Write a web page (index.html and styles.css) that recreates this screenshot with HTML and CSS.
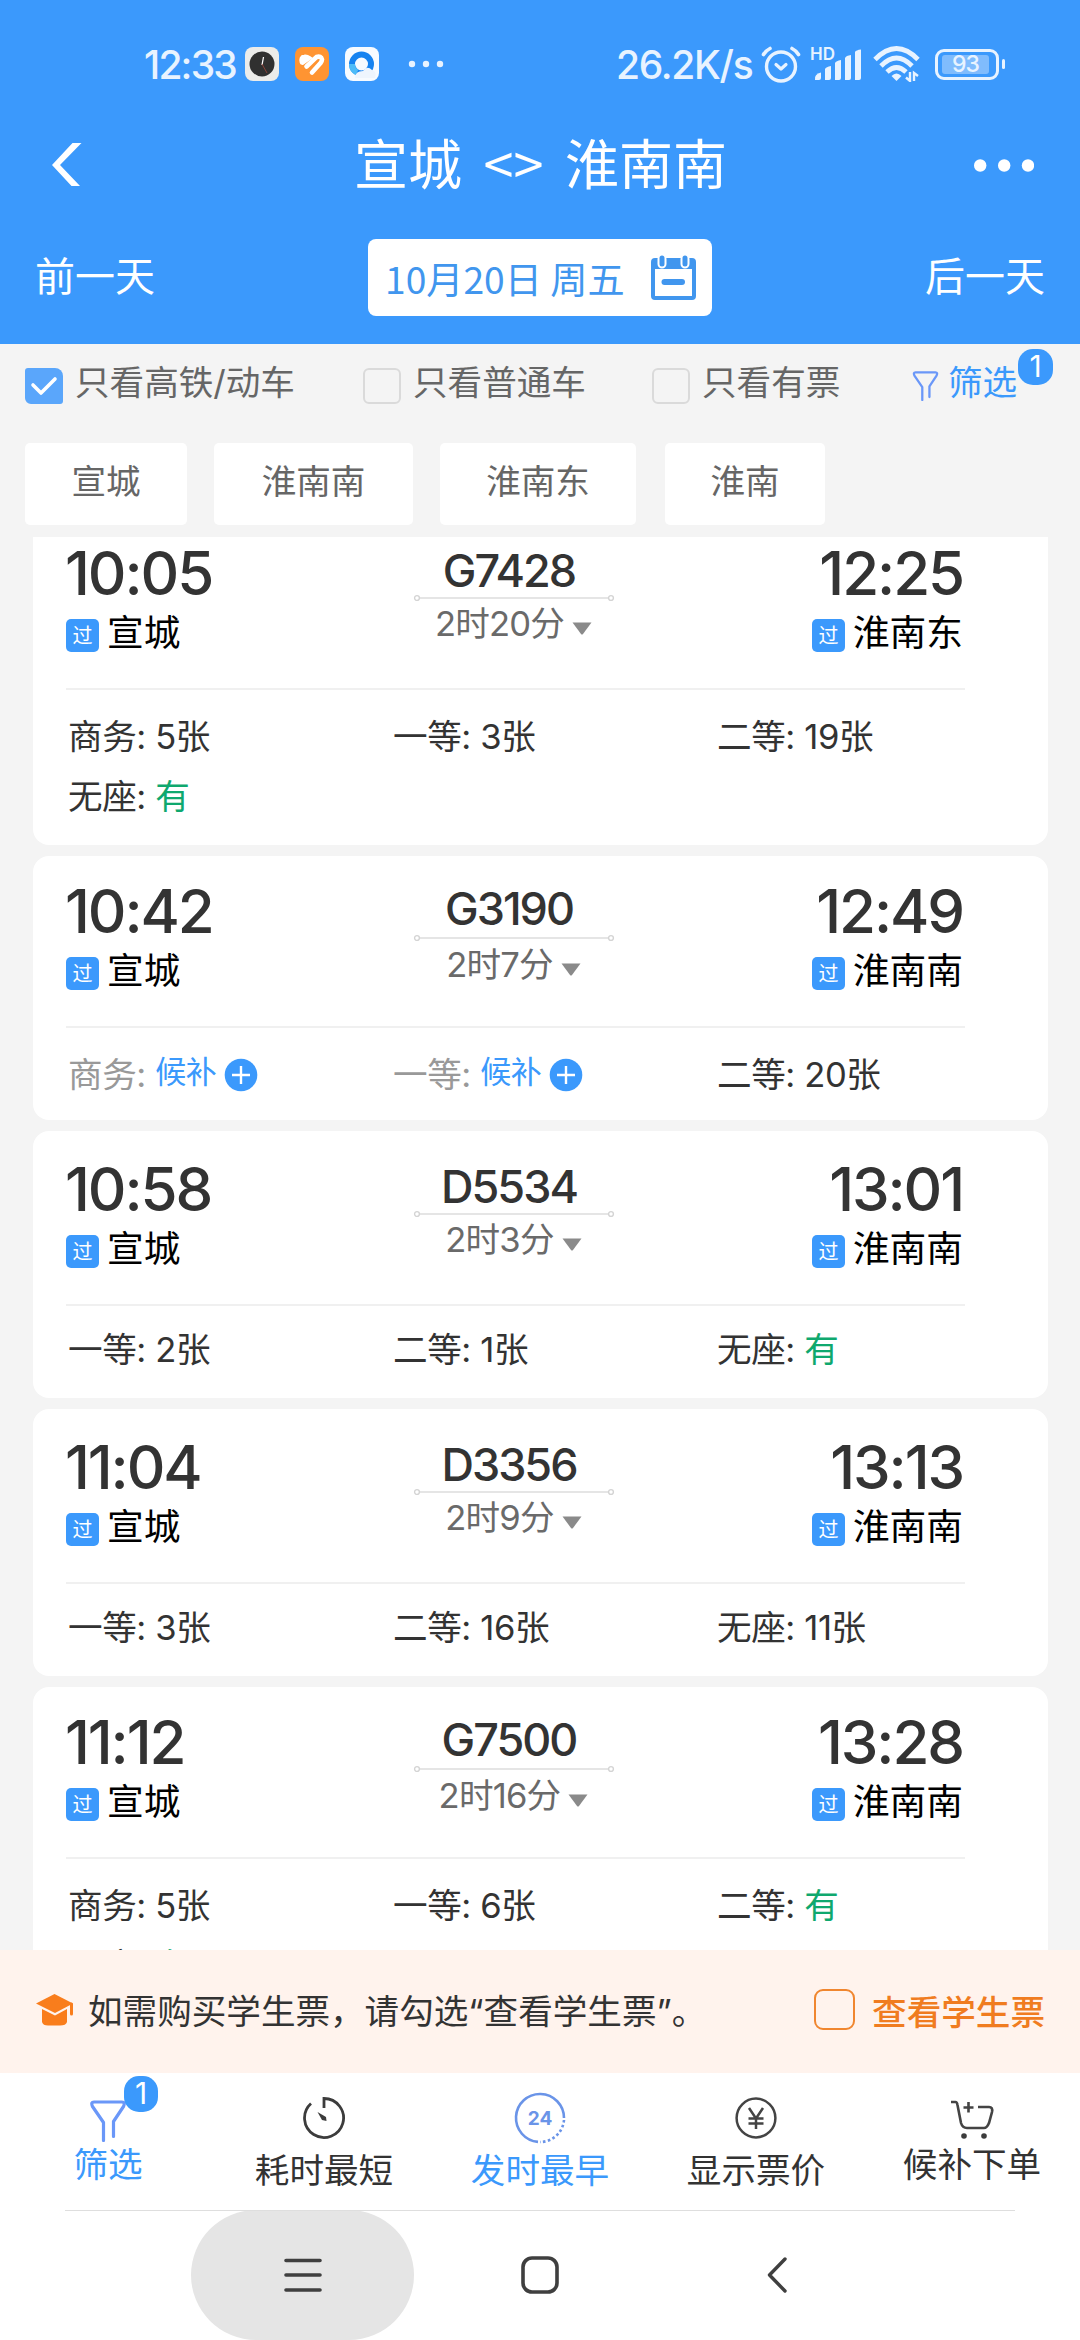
FILE: index.html
```html
<!DOCTYPE html>
<html lang="zh-CN">
<head>
    <meta charset="UTF-8">
    <meta name="viewport" content="width=device-width, initial-scale=1.0">
    <title>宣城 - 淮南南</title>
    <link rel="stylesheet" href="styles.css">
</head>
<body>
    <svg class="defs" width="0" height="0">
        <symbol id="track" viewBox="0 0 202 8">
            <path d="M7 4H195" stroke="#dcdcdc" stroke-width="1.6"/>
            <circle cx="4" cy="4" r="2.4" fill="#fff" stroke="#d4d4d4" stroke-width="1.4"/>
            <circle cx="198" cy="4" r="2.4" fill="#fff" stroke="#d4d4d4" stroke-width="1.4"/>
        </symbol>
        <symbol id="arrow" viewBox="0 0 22 13">
            <path d="M1.5 0.5H20.5L12 12Q11 13 10 12Z" fill="#8a8a8a"/>
        </symbol>
        <symbol id="plus" viewBox="0 0 34 34">
            <circle cx="17" cy="17" r="16.3" fill="#3b99fc"/>
            <path d="M8 17H26M17 8V26" stroke="#fff" stroke-width="2.4"/>
        </symbol>
        <symbol id="funnel" viewBox="0 0 36 42">
            <path d="M13.500 40.500V22.500L2.500 6.500Q0.500 2 4 2H32Q35.500 2 33.500 6.500L23.500 21.500V36.500" fill="none" stroke="#6a97f8" stroke-width="3.200" stroke-linecap="round" stroke-linejoin="round"/>
        </symbol>
    </svg>

    <header class="header">
        <div class="status">
            <span class="clock">12:33</span>
            <div class="apps">
                <svg width="34" height="34" viewBox="0 0 34 34">
                    <rect width="34" height="34" rx="8" fill="#ececea"/>
                    <circle cx="17" cy="17" r="12.500" fill="#303030"/>
                    <path d="M17 18L18.500 10" stroke="#fff" stroke-width="1.300"/>
                    <path d="M17 17L22 26" stroke="#a0483c" stroke-width="0.800"/>
                </svg>
                <svg width="34" height="34" viewBox="0 0 34 34">
                    <rect width="34" height="34" rx="8" fill="#ff9432"/>
                    <g fill="none" stroke="#fff" stroke-width="4.600" stroke-linecap="round">
                        <path d="M7 15.500Q5.500 10 9.500 9.800Q12 9.500 14 11L7.500 15.500"/>
                        <path d="M11.500 19.500L21.500 10Q26 8.500 27 12.500Q27 14 25.500 16L17 25.500"/>
                    </g>
                    <path d="M14.500 22.500L23 13.500" stroke="#ff9432" stroke-width="1.600"/>
                </svg>
                <svg width="34" height="34" viewBox="0 0 34 34">
                    <rect width="34" height="34" rx="8" fill="#f7fbff"/>
                    <circle cx="16.500" cy="17" r="9.500" fill="none" stroke="#1683f0" stroke-width="6"/>
                    <path d="M7 17A9.500 9.500 0 0 0 12 25.400" fill="none" stroke="#4dbcf8" stroke-width="6"/>
                    <path d="M10 31Q10 24 18 24Q22 18 27 23Q32 24 30 31Z" fill="#eef5fd"/>
                </svg>
            </div>
            <svg class="dots" width="36" height="8" viewBox="0 0 36 8">
                <g fill="#e8f3ff"><circle cx="4" cy="4" r="3.200"/><circle cx="18" cy="4" r="3.200"/><circle cx="32" cy="4" r="3.200"/></g>
            </svg>
            <div class="status-right">
                <span class="speed">26.2K/s</span>
                <svg width="40" height="38" viewBox="0 0 40 38">
                    <g fill="none" stroke="#e8f3ff" stroke-linecap="round" stroke-linejoin="round">
                        <circle cx="20" cy="21.500" r="14.500" stroke-width="3.400"/>
                        <path d="M15 19.500L20 24L25 19.500" stroke-width="3.200"/>
                        <path d="M2.500 9.500Q5 5.500 9 3.500M31 3.500Q35 5.500 37.500 9.500" stroke-width="3.600"/>
                    </g>
                </svg>
                <div class="signal">
                    <span class="hd">HD</span>
                    <svg width="50" height="34" viewBox="0 0 50 34">
                        <g fill="#e8f3ff">
                            <path d="M3 33Q2 27 9 25.500V31Q9 33 7 33Z"/>
                            <path d="M13 33V22Q14 20 19 19V31Q19 33 17 33Z"/>
                            <path d="M23 33V16Q24 14 29 13V31Q29 33 27 33Z"/>
                            <path d="M33 33V11Q34 8.500 39 8V31Q39 33 37 33Z"/>
                            <path d="M43 33V5Q44 3 49 2.500V31Q49 33 47 33Z"/>
                        </g>
                    </svg>
                </div>
                <svg class="wifi" width="48" height="36" viewBox="0 0 48 36">
                    <g fill="none" stroke="#e8f3ff" stroke-width="4.800">
                        <path d="M2 13.500Q23.500 -8.500 45 13.500"/>
                        <path d="M8 20Q23.500 4 39 20"/>
                        <path d="M14 26Q23.500 17 33 26"/>
                    </g>
                    <path d="M18.500 30Q23.500 25 28.500 30L23.500 35Z" fill="#e8f3ff"/>
                    <path d="M37 26V35L33 31.500M41 35V27L45 30" fill="none" stroke="#e8f3ff" stroke-width="2.400"/>
                </svg>
                <div class="battery"><span>93</span></div>
                <i class="battery-tip"></i>
            </div>
        </div>

        <div class="title-bar">
            <svg width="30" height="44" viewBox="0 0 30 44">
                <path d="M20.500 0H29.500L8 22L28 43H19.500L0 22Z" fill="#fff"/>
            </svg>
            <h1>宣城 &lt;&gt; 淮南南</h1>
            <svg width="60" height="13" viewBox="0 0 60 13">
                <g fill="#fff"><circle cx="6.200" cy="6.500" r="6.200"/><circle cx="30.200" cy="6.500" r="6.200"/><circle cx="54" cy="6.500" r="6.200"/></g>
            </svg>
        </div>

        <div class="day-bar">
            <span class="day">前一天</span>
            <div class="date">
                <span>10月20日 周五</span>
                <svg width="45" height="46" viewBox="0 0 45 46">
                    <rect x="2" y="5" width="41" height="38" rx="2" fill="#fff" stroke="#4196ee" stroke-width="4"/>
                    <path d="M2 4H43V14H2Z" fill="#4196ee"/>
                    <g stroke-linecap="round">
                        <path d="M11 4V9M34 4V9" stroke="#fff" stroke-width="9"/>
                        <path d="M11 3V9M34 3V9" stroke="#4196ee" stroke-width="5"/>
                        <path d="M13.500 27H31" stroke="#4196ee" stroke-width="6"/>
                    </g>
                </svg>
            </div>
            <span class="day">后一天</span>
        </div>
    </header>

    <section class="filters">
        <div class="checks">
            <div class="check c1">
                <i class="box checked">
                    <svg width="38" height="36" viewBox="0 0 38 36"><path d="M8 17L16 25L30 11" fill="none" stroke="#fff" stroke-width="3.600" stroke-linecap="round" stroke-linejoin="round"/></svg>
                </i>
                <span>只看高铁/动车</span>
            </div>
            <div class="check c2"><i class="box"></i><span>只看普通车</span></div>
            <div class="check c3"><i class="box"></i><span>只看有票</span></div>
            <div class="more-filter">
                <svg width="27" height="30"><use href="#funnel"/></svg>
                <span>筛选</span>
                <b class="count">1</b>
            </div>
        </div>
        <div class="stations">
            <span class="w1">宣城</span>
            <span class="w2">淮南南</span>
            <span class="w3">淮南东</span>
            <span class="w4">淮南</span>
        </div>
    </section>

    <main class="list">
        <article class="train first tight">
            <div class="route">
                <div class="from">
                    <div class="time">10:05</div>
                    <div class="station"><i>过</i>宣城</div>
                </div>
                <div class="mid">
                    <div class="number">G7428</div>
                    <svg class="track" width="202" height="8"><use href="#track"/></svg>
                    <div class="duration">2时20分<svg width="22" height="13"><use href="#arrow"/></svg></div>
                </div>
                <div class="to">
                    <div class="time">12:25</div>
                    <div class="station"><i>过</i>淮南东</div>
                </div>
            </div>
            <div class="seats">
                <span>商务: 5张</span>
                <span>一等: 3张</span>
                <span>二等: 19张</span>
                <span>无座: <em>有</em></span>
            </div>
        </article>

        <article class="train">
            <div class="route">
                <div class="from">
                    <div class="time">10:42</div>
                    <div class="station"><i>过</i>宣城</div>
                </div>
                <div class="mid">
                    <div class="number">G3190</div>
                    <svg class="track" width="202" height="8"><use href="#track"/></svg>
                    <div class="duration">2时7分<svg width="22" height="13"><use href="#arrow"/></svg></div>
                </div>
                <div class="to">
                    <div class="time">12:49</div>
                    <div class="station"><i>过</i>淮南南</div>
                </div>
            </div>
            <div class="seats">
                <span class="sold-out">商务: <a>候补</a><svg width="34" height="34"><use href="#plus"/></svg></span>
                <span class="sold-out">一等: <a>候补</a><svg width="34" height="34"><use href="#plus"/></svg></span>
                <span>二等: 20张</span>
            </div>
        </article>

        <article class="train low tight">
            <div class="route">
                <div class="from">
                    <div class="time">10:58</div>
                    <div class="station"><i>过</i>宣城</div>
                </div>
                <div class="mid">
                    <div class="number">D5534</div>
                    <svg class="track" width="202" height="8"><use href="#track"/></svg>
                    <div class="duration">2时3分<svg width="22" height="13"><use href="#arrow"/></svg></div>
                </div>
                <div class="to">
                    <div class="time">13:01</div>
                    <div class="station"><i>过</i>淮南南</div>
                </div>
            </div>
            <div class="seats">
                <span>一等: 2张</span>
                <span>二等: 1张</span>
                <span>无座: <em>有</em></span>
            </div>
        </article>

        <article class="train low tight">
            <div class="route">
                <div class="from">
                    <div class="time">11:04</div>
                    <div class="station"><i>过</i>宣城</div>
                </div>
                <div class="mid">
                    <div class="number">D3356</div>
                    <svg class="track" width="202" height="8"><use href="#track"/></svg>
                    <div class="duration">2时9分<svg width="22" height="13"><use href="#arrow"/></svg></div>
                </div>
                <div class="to">
                    <div class="time">13:13</div>
                    <div class="station"><i>过</i>淮南南</div>
                </div>
            </div>
            <div class="seats">
                <span>一等: 3张</span>
                <span>二等: 16张</span>
                <span>无座: 11张</span>
            </div>
        </article>

        <article class="train">
            <div class="route">
                <div class="from">
                    <div class="time">11:12</div>
                    <div class="station"><i>过</i>宣城</div>
                </div>
                <div class="mid">
                    <div class="number">G7500</div>
                    <svg class="track" width="202" height="8"><use href="#track"/></svg>
                    <div class="duration">2时16分<svg width="22" height="13"><use href="#arrow"/></svg></div>
                </div>
                <div class="to">
                    <div class="time">13:28</div>
                    <div class="station"><i>过</i>淮南南</div>
                </div>
            </div>
            <div class="seats">
                <span>商务: 5张</span>
                <span>一等: 6张</span>
                <span>二等: <em>有</em></span>
                <span>无座: <em>有</em></span>
            </div>
        </article>
    </main>

    <section class="student">
        <svg width="38" height="32" viewBox="0 0 38 32">
            <path d="M0 9.500L18.500 0L37 9.500L19 19Z" fill="#f97d1c"/>
            <path d="M6 15L19 21.500L31 15V28Q30 31.500 24 31.500H12Q7 31.500 6 28Z" fill="#f97d1c"/>
            <path d="M35.500 10V20" stroke="#f97d1c" stroke-width="3" stroke-linecap="round"/>
        </svg>
        <p>如需购买学生票，请勾选“查看学生票”。</p>
        <div class="student-check"><i></i><span>查看学生票</span></div>
    </section>

    <nav class="tabs">
        <div class="tab active short">
            <div class="icon">
                <svg width="36" height="42"><use href="#funnel"/></svg>
                <b class="count">1</b>
            </div>
            <span>筛选</span>
        </div>
        <div class="tab">
            <div class="icon">
                <svg width="44" height="44" viewBox="0 0 44 44">
                    <path d="M22 12V2.500A19.500 19.500 0 1 1 9 7.500" fill="none" stroke="#3c3c3c" stroke-width="2.800"/>
                    <path d="M15.500 16L20 24L24.500 25L24 21Z" fill="#3c3c3c"/>
                </svg>
            </div>
            <span>耗时最短</span>
        </div>
        <div class="tab active">
            <div class="icon">
                <svg width="52" height="52" viewBox="0 0 52 52">
                    <g fill="none" stroke="#6a94e8" stroke-width="2.600">
                        <path d="M24 49.900A24 24 0 1 1 50 26"/>
                        <path d="M50 28A24 24 0 0 1 26 50" stroke-dasharray="2.600 2.400"/>
                    </g>
                    <text x="26" y="33" class="hours">24</text>
                </svg>
            </div>
            <span>发时最早</span>
        </div>
        <div class="tab">
            <div class="icon">
                <svg width="44" height="44" viewBox="0 0 44 44">
                    <g fill="none" stroke="#444" stroke-width="2.500">
                        <circle cx="22" cy="22" r="19.400"/>
                        <path d="M15 12L22 22.500L29 12M22 22V33M14.500 22.500H29.500M14.500 27.500H29.500"/>
                    </g>
                </svg>
            </div>
            <span>显示票价</span>
        </div>
        <div class="tab short">
            <div class="icon cart">
                <svg width="44" height="40" viewBox="0 0 44 40">
                    <g fill="none" stroke="#444" stroke-width="2.600">
                        <path d="M1 3H5.500Q7 3 7.500 6L11 24Q12.500 29 17 29H34Q37 29 39 24L42 13Q43 8 39 8H28"/>
                        <path d="M18.500 3V13.500M13.500 8.500H23.500"/>
                    </g>
                    <circle cx="14" cy="37" r="2.800" fill="#3c3c3c"/><circle cx="34" cy="37" r="2.800" fill="#3c3c3c"/>
                </svg>
            </div>
            <span>候补下单</span>
        </div>
    </nav>

    <footer class="system-nav">
        <div class="key pressed">
            <svg width="38" height="34" viewBox="0 0 38 34"><path d="M2 2.500H36M2 17H36M2 32H36" stroke="#3f3f3f" stroke-width="3.600" stroke-linecap="round"/></svg>
        </div>
        <div class="key">
            <svg width="38" height="38" viewBox="0 0 38 38"><rect x="2" y="2" width="34" height="34" rx="9" fill="none" stroke="#3f3f3f" stroke-width="3.600"/></svg>
        </div>
        <div class="key">
            <svg width="20" height="36" viewBox="0 0 20 36"><path d="M18 2L2.500 18L18 34" fill="none" stroke="#3f3f3f" stroke-width="3.400" stroke-linecap="round" stroke-linejoin="round"/></svg>
        </div>
    </footer>
</body>
</html>
```

FILE: styles.css
```css
* {
    box-sizing: border-box;
}
body {
    margin: 0;
    width: 1080px;
    height: 2340px;
    overflow: hidden;
    display: flex;
    flex-direction: column;
    background-color: #fff;
    color: #333;
    font-family: Inter, "Noto Sans CJK SC", sans-serif;
    font-size: 34.6px;
}
h1, p {
    margin: 0;
    font-weight: normal;
}
i, em {
    font-style: normal;
}
svg {
    display: block;
    flex-shrink: 0;
}
.defs {
    position: absolute;
}

/* header */
.header {
    height: 344px;
    flex-shrink: 0;
    background-color: #3b99fc;
    color: #fff;
    font-family: "Noto Sans CJK SC", sans-serif;
}
.status {
    height: 128px;
    padding: 0 75px 0 144px;
    display: flex;
    align-items: center;
    font-family: Inter, sans-serif;
    font-weight: 500;
    color: #e8f3ff;
}
.clock {
    width: 101px;
    font-size: 39px;
    letter-spacing: -1.8px;
}
.apps {
    display: flex;
    gap: 16px;
}
.dots {
    margin-left: 29px;
}
.status-right {
    display: flex;
    align-items: center;
    margin-left: auto;
}
.speed {
    width: 145px;
    font-size: 39px;
    letter-spacing: -1.3px;
}
.signal {
    position: relative;
    margin-left: 11px;
}
.hd {
    position: absolute;
    left: -2px;
    top: -1px;
    font-size: 17px;
    line-height: 17px;
    font-weight: 600;
}
.wifi {
    margin-left: 11px;
}
.battery {
    width: 64px;
    height: 31px;
    margin-left: 14px;
    padding: 3px;
    border: 3px solid #e8f3ff;
    border-radius: 9px;
}
.battery span {
    display: block;
    width: 47px;
    margin-left: 1px;
    height: 19px;
    background-color: #80bcfd;
    border-radius: 3px;
    font-size: 23px;
    line-height: 19px;
    letter-spacing: -1px;
    text-align: center;
}
.battery-tip {
    width: 3px;
    height: 10px;
    margin-left: 3px;
    border-radius: 2px;
    background-color: #e8f3ff;
}
.title-bar {
    height: 74px;
    padding: 0 46px 0 52px;
    display: flex;
    align-items: center;
    justify-content: space-between;
}
.title-bar h1 {
    font-size: 54px;
    line-height: 74px;
    word-spacing: 9.5px;
    margin: -6px 0 0 25px;
}
.day-bar {
    height: 142px;
    padding: 0 35px;
    display: flex;
    align-items: flex-start;
    justify-content: space-between;
}
.day {
    margin-top: 42px;
    font-size: 40px;
    line-height: 60px;
}
.date {
    width: 344px;
    height: 77px;
    margin-top: 37px;
    padding: 0 16px 0 17px;
    display: flex;
    align-items: center;
    justify-content: space-between;
    border-radius: 8px;
    background-color: #fff;
    color: #4196ee;
    font-size: 37.2px;
}

/* filters */
.filters {
    height: 193px;
    flex-shrink: 0;
    background-color: #f4f4f4;
    color: #666;
}
.checks {
    height: 99px;
    padding: 24px 0 0 25px;
    display: flex;
    align-items: flex-start;
}
.check {
    display: flex;
    gap: 12px;
    line-height: 29px;
}
.c1 {
    width: 338px;
}
.c2 {
    width: 289px;
}
.c3 {
    width: 260px;
}
.box {
    width: 38px;
    height: 36px;
    border: 2px solid #dadada;
    border-radius: 6px;
}
.box.checked {
    border: none;
    background-color: #5aa6fb;
    border-radius: 3px 8px 3px 6px;
}
.more-filter {
    position: relative;
    display: flex;
    gap: 9px;
    color: #3b99fc;
    line-height: 29px;
}
.more-filter svg {
    margin-top: 3px;
}
.count {
    position: absolute;
    width: 35px;
    height: 36px;
    border-radius: 15px;
    background-color: #3b99fc;
    color: #fff;
    font-size: 30px;
    font-weight: 400;
    line-height: 34px;
    text-align: center;
}
.more-filter .count {
    left: 106px;
    top: -19px;
}
.stations {
    display: flex;
    padding-left: 25px;
}
.stations span {
    height: 82px;
    margin-right: 27px;
    border-radius: 5px;
    background-color: #fff;
    line-height: 77px;
    text-align: center;
}
.w1 {
    width: 162px;
}
.w2 {
    width: 199px;
}
.stations .w3 {
    width: 196px;
    margin-right: 29px;
}
.w4 {
    width: 160px;
}

/* train list */
.list {
    height: 1413px;
    flex-shrink: 0;
    overflow: hidden;
    display: flex;
    flex-direction: column;
    gap: 11px;
    padding: 0 32px 0 33px;
    background-color: #f4f4f4;
}
.train {
    flex-shrink: 0;
    padding: 25px 0 16px 33px;
    border-radius: 16px;
    background-color: #fff;
}
.train.first {
    margin-top: -19px;
    padding-bottom: 19px;
}
.train.low {
    padding: 28px 0 19px 33px;
}
.route {
    width: 899px;
    height: 147px;
    display: grid;
    grid-template-columns: 347px 202px 350px;
    border-bottom: 2px solid #f0f0f0;
}
.to {
    display: flex;
    flex-direction: column;
    align-items: flex-end;
    padding-right: 2px;
}
.time {
    margin-left: -1px;
    font-size: 60px;
    font-weight: 500;
    line-height: 60px;
    letter-spacing: -2.1px;
}
.station {
    margin-top: 16px;
    display: flex;
    font-size: 36.7px;
    line-height: 28px;
    color: #000;
}
.station i {
    width: 33px;
    height: 33px;
    margin-right: 8px;
    border-radius: 5px;
    background-color: #3b99fc;
    color: #fff;
    font-size: 20px;
    line-height: 34px;
    text-align: center;
}
.mid {
    padding-top: 5px;
}
.number {
    padding-right: 10px;
    font-size: 45px;
    font-weight: 500;
    line-height: 46px;
    letter-spacing: -2px;
    text-align: center;
}
.track {
    margin: 2px 0 5px;
}
.tight .track {
    margin: 0 0 4px;
}
.duration {
    display: flex;
    justify-content: center;
    gap: 7px;
    color: #6a6a6a;
    line-height: 34px;
    letter-spacing: -0.8px;
}
.duration svg {
    margin-top: 16px;
}
.seats {
    margin-top: 16px;
    padding-left: 2px;
    display: grid;
    grid-template-columns: 325px 324px 250px;
    line-height: 60px;
    letter-spacing: -0.4px;
}
.low .seats {
    margin-top: 13px;
}
.seats span {
    display: flex;
    white-space: pre;
}
.seats em {
    color: #0fa86e;
}
.sold-out {
    color: #999;
}
.sold-out a {
    margin-top: -2px;
    font-size: 31px;
    color: #3b99fc;
}
.sold-out svg {
    margin: 14px 0 0 8px;
}

/* student tickets */
.student {
    height: 123px;
    flex-shrink: 0;
    padding: 0 35px 4px 36px;
    display: flex;
    align-items: center;
    background-color: #fff3ed;
}
.student p {
    margin-left: 14px;
    margin-top: -2px;
    white-space: nowrap;
}
.student-check {
    margin-left: auto;
    display: flex;
    align-items: center;
    gap: 17px;
    color: #f07c20;
    font-weight: 500;
}
.student-check i {
    width: 41px;
    height: 41px;
    border: 2.5px solid #f0862f;
    border-radius: 9px;
}

/* bottom tabs */
.tabs {
    height: 137px;
    flex-shrink: 0;
    display: grid;
    grid-template-columns: repeat(5, 216px);
}
.tab {
    display: flex;
    flex-direction: column;
    align-items: center;
}
.tab span {
    line-height: 38px;
}
.icon {
    position: relative;
    height: 78px;
    padding-top: 12px;
    display: flex;
    align-items: center;
}
.short .icon {
    height: 72px;
    padding-top: 23px;
}
.short .cart {
    padding-top: 19px;
}
.active {
    color: #3b99fc;
}
.icon .count {
    left: 34px;
    top: 3px;
    width: 34px;
}
.hours {
    fill: #6a94e8;
    font-size: 19px;
    font-weight: 700;
    text-anchor: middle;
}

/* android keys */
.system-nav {
    position: relative;
    height: 130px;
    padding-left: 191px;
    display: flex;
}
.system-nav::before {
    content: "";
    position: absolute;
    left: 65px;
    top: 0;
    width: 950px;
    height: 1px;
    background-color: #dedede;
}
.key {
    width: 223px;
    display: flex;
    align-items: center;
    justify-content: center;
    margin-right: 14px;
}
.pressed {
    border-radius: 65px;
    background-color: #e5e5e5;
}
```
